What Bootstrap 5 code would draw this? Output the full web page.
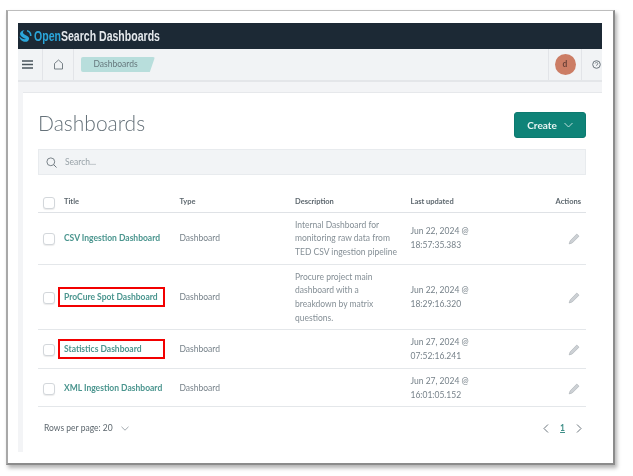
<!DOCTYPE html>
<html lang="en">
<head>
<meta charset="utf-8">
<title>OpenSearch Dashboards</title>
<link href="https://cdn.jsdelivr.net/npm/bootstrap@5.3.0/dist/css/bootstrap.min.css" rel="stylesheet">
<style>
html,body{background:#fff;height:100%;overflow:hidden}
body{font-family:"Lato","Open Sans",sans-serif;padding:10px 18px 11px 6px}
.shot-frame{width:609px;height:455px;border:1px solid #bdbdbd;border-left:2px solid #a8a8a8;border-right:2px solid #8c8c8c;border-bottom:2px solid #8c8c8c;box-shadow:2px 3px 4px rgba(0,0,0,.3);padding:12px 11px 0 10px;background:#fff;filter:blur(.45px)}
.shot-app{height:429px;overflow:hidden;display:flex;flex-direction:column}
.top-strip{height:26px;background:#1c2935;flex:none;padding-left:1px;gap:2px}
.brand-name{font-family:"Liberation Sans",sans-serif;font-size:15.5px;font-weight:700;color:#e4e8ec;line-height:1;transform:scaleX(.68);transform-origin:left center;white-space:nowrap}
.brand-open{color:#2ba6da}
.crumb-bar{height:33px;flex:none;background:#f1f3f5;border-bottom:2px solid #e4e6e9}
.bar-cell{height:100%;border-right:1px solid #e2e4e8}
.cell-menu{width:25px}
.cell-home{width:31px}
.crumb-pill{margin-left:7px;width:74px;height:15px;background:#b8dedc;clip-path:polygon(0 0,100% 0,93% 100%,0 100%);border-radius:2px;font-size:8.5px;color:#66787d;padding-right:5px}
.cell-user{width:34px;border-left:1px solid #e2e4e8}
.user-dot{width:21px;height:21px;border-radius:50%;background:#cc7d65;color:#6d4238;font-size:8.5px;font-weight:700}
.cell-help{width:20px;padding-left:10px}
.app-body{flex:1;background:#f3f4f6;padding:10px 0 0 5px;min-height:0}
.app-panel{height:100%;background:#fff;border-top:1px solid #e6e8eb;padding:19px 16px 0 15px}
.page-name{font-size:21px;font-weight:300;color:#66727a;margin:0;line-height:22px}
.make-btn{width:72px;height:26px;background:#0f8378;border:1px solid #0c7a70;color:#e8f5f3;font-size:10px;font-weight:700;border-radius:3px;padding:0;gap:7px}
.make-btn:hover{background:#0f8378;color:#e8f5f3}
.find-box{height:26px;margin-top:11px;background:#f2f4f6;border:1px solid #e8ebee;padding-left:7px;gap:8px;font-size:8.5px;color:#98a2a8}
.dash-table{table-layout:fixed;width:548px;margin:22px 0 0;font-size:8.5px;line-height:13.7px;--bs-table-bg:transparent;color:#77828a}
.dash-table th,.dash-table td{padding:6px 5px 4px;border-bottom:1px solid #e4e7ea;vertical-align:middle;color:#77828a}
.dash-table th{font-size:7.5px;font-weight:700;line-height:10px;color:#5d676e;padding:0 5px;height:15px;vertical-align:top;border-bottom:1px solid #dfe2e6}
.dash-table td.name-cell{position:relative}
.dash-table td.desc-cell{color:#858f96}
.pick-col{width:21px}.name-col,.type-col,.desc-col{width:115.5px}.when-col{width:114px}
.tick-box{display:block;width:12px;height:12px;border:1px solid #d3d7db;border-radius:3px;background:#fff;box-shadow:0 1px 1px rgba(0,0,0,.08)}
.pick-cell{padding-left:5px!important}
.dash-link{color:#4a958e;font-weight:700;text-decoration:none}
.red-mark{position:absolute;left:-1px;top:50%;transform:translateY(-50%);width:107px;height:20px;border:2px solid #f20000;pointer-events:none}
.act-cell{text-align:right}
.edit-pen{margin-right:1px;vertical-align:middle}
.table-foot{padding:15px 4px 0 6px;font-size:8.5px;color:#5d676e}
.page-nav{gap:11px}
.page-now{color:#3f8f88;font-weight:700;text-decoration:underline}
</style>
</head>
<body>
<div class="shot-frame">
  <div class="shot-app">
    <div class="top-strip d-flex align-items-center">
      <svg width="13" height="14" viewBox="0 0 13 14"><path d="M8 1a5.5 5.5 0 0 1 4.5 6h-1.6A4.2 4.2 0 0 0 8 2.600z" fill="#2ba6da"/><path d="M1 4.500C1.500 2.500 3.500 1 5.500 1.200 4 2 3.500 3.500 4.500 4.800 5.500 6 8 6.500 9.500 8c1 1.200 .5 3-.5 4-1.500 1.200-4.500 1.200-6.500-.5C1 10 .5 8.500.5 7.500 2 9.500 5 10.500 7 10 4.500 9 1 7.500 1 4.500z" fill="#2ba6da"/></svg>
      <span class="brand-name"><span class="brand-open">Open</span>Search Dashboards</span>
    </div>
    <div class="crumb-bar d-flex align-items-center">
      <div class="bar-cell cell-menu d-flex align-items-center">
        <svg class="ms-1" width="11" height="9" viewBox="0 0 11 9"><path d="M0 1h11M0 4.500h11M0 8h11" stroke="#4a555c" stroke-width="1.300"/></svg>
      </div>
      <div class="bar-cell cell-home d-flex align-items-center justify-content-center">
        <svg width="11" height="11" viewBox="0 0 11 11"><path d="M1.500 10V4.500L5.500 1l4 3.500V10z" fill="none" stroke="#6a747b" stroke-width=".9"/></svg>
      </div>
      <div class="crumb-pill d-flex align-items-center justify-content-center">Dashboards</div>
      <div class="bar-cell cell-user ms-auto d-flex align-items-center justify-content-center">
        <div class="user-dot d-flex align-items-center justify-content-center">d</div>
      </div>
      <div class="cell-help d-flex align-items-center">
        <svg width="9" height="9" viewBox="0 0 9 9"><circle cx="4.500" cy="4.500" r="3.800" fill="none" stroke="#6a747b"/><path d="M3.200 3.500a1.300 1.300 0 1 1 1.300 1.500v.6" fill="none" stroke="#6a747b" stroke-width=".8"/></svg>
      </div>
    </div>
    <div class="app-body">
      <div class="app-panel">
        <div class="d-flex justify-content-between align-items-start">
          <h1 class="page-name">Dashboards</h1>
          <button type="button" class="btn make-btn d-flex align-items-center justify-content-center">Create
            <svg width="9" height="6" viewBox="0 0 9 6"><path d="M.5 1l4 4 4-4" fill="none" stroke="#cfe8e5" stroke-width=".9"/></svg>
          </button>
        </div>
        <div class="find-box d-flex align-items-center">
          <svg width="11" height="11" viewBox="0 0 11 11"><circle cx="4.800" cy="4.800" r="3.900" fill="none" stroke="#6d777e" stroke-width=".9"/><path d="M7.600 7.600L10.500 10.500" stroke="#6d777e"/></svg>
          <span>Search...</span>
        </div>
        <table class="table dash-table">
          <colgroup><col class="pick-col"><col class="name-col"><col class="type-col"><col class="desc-col"><col class="when-col"><col></colgroup>
          <thead>
            <tr><th class="pick-cell"><span class="tick-box"></span></th><th>Title</th><th>Type</th><th>Description</th><th>Last updated</th><th class="act-cell">Actions</th></tr>
          </thead>
          <tbody>
            <tr>
              <td class="pick-cell"><span class="tick-box"></span></td>
              <td class="name-cell"><a class="dash-link" href="#">CSV Ingestion Dashboard</a></td>
              <td>Dashboard</td>
              <td class="desc-cell">Internal Dashboard for monitoring raw data from TED CSV ingestion pipeline</td>
              <td>Jun 22, 2024 @<br>18:57:35.383</td>
              <td class="act-cell"><svg class="edit-pen" width="12" height="12" viewBox="0 0 12 12"><path d="M8.800 1l2.200 2.200-6.800 6.800-3 .9.900-3z" fill="#cdd1d5" stroke="#a4abb0" stroke-width=".6"/></svg></td>
            </tr>
            <tr>
              <td class="pick-cell"><span class="tick-box"></span></td>
              <td class="name-cell"><a class="dash-link" href="#">ProCure Spot Dashboard</a><span class="red-mark"></span></td>
              <td>Dashboard</td>
              <td class="desc-cell">Procure project main dashboard with a breakdown by matrix questions.</td>
              <td>Jun 22, 2024 @<br>18:29:16.320</td>
              <td class="act-cell"><svg class="edit-pen" width="12" height="12" viewBox="0 0 12 12"><path d="M8.800 1l2.200 2.200-6.800 6.800-3 .9.900-3z" fill="#cdd1d5" stroke="#a4abb0" stroke-width=".6"/></svg></td>
            </tr>
            <tr>
              <td class="pick-cell"><span class="tick-box"></span></td>
              <td class="name-cell"><a class="dash-link" href="#">Statistics Dashboard</a><span class="red-mark"></span></td>
              <td>Dashboard</td>
              <td class="desc-cell"></td>
              <td>Jun 27, 2024 @<br>07:52:16.241</td>
              <td class="act-cell"><svg class="edit-pen" width="12" height="12" viewBox="0 0 12 12"><path d="M8.800 1l2.200 2.200-6.800 6.800-3 .9.900-3z" fill="#cdd1d5" stroke="#a4abb0" stroke-width=".6"/></svg></td>
            </tr>
            <tr>
              <td class="pick-cell"><span class="tick-box"></span></td>
              <td class="name-cell"><a class="dash-link" href="#">XML Ingestion Dashboard</a></td>
              <td>Dashboard</td>
              <td class="desc-cell"></td>
              <td>Jun 27, 2024 @<br>16:01:05.152</td>
              <td class="act-cell"><svg class="edit-pen" width="12" height="12" viewBox="0 0 12 12"><path d="M8.800 1l2.200 2.200-6.800 6.800-3 .9.900-3z" fill="#cdd1d5" stroke="#a4abb0" stroke-width=".6"/></svg></td>
            </tr>
          </tbody>
        </table>
        <div class="table-foot d-flex justify-content-between align-items-center">
          <div class="d-flex align-items-center gap-2">
            <span>Rows per page: 20</span>
            <svg width="8" height="5" viewBox="0 0 8 5"><path d="M.5 .8L4 4.200 7.500 .8" fill="none" stroke="#8a9399" stroke-width=".8"/></svg>
          </div>
          <div class="page-nav d-flex align-items-center">
            <svg width="6" height="9" viewBox="0 0 6 9"><path d="M5 .5L1 4.500 5 8.500" fill="none" stroke="#6d777e"/></svg>
            <span class="page-now">1</span>
            <svg width="6" height="9" viewBox="0 0 6 9"><path d="M1 .5L5 4.500 1 8.500" fill="none" stroke="#6d777e"/></svg>
          </div>
        </div>
      </div>
    </div>
  </div>
</div>
<script src="https://cdn.jsdelivr.net/npm/bootstrap@5.3.0/dist/js/bootstrap.bundle.min.js"></script>
</body>
</html>
